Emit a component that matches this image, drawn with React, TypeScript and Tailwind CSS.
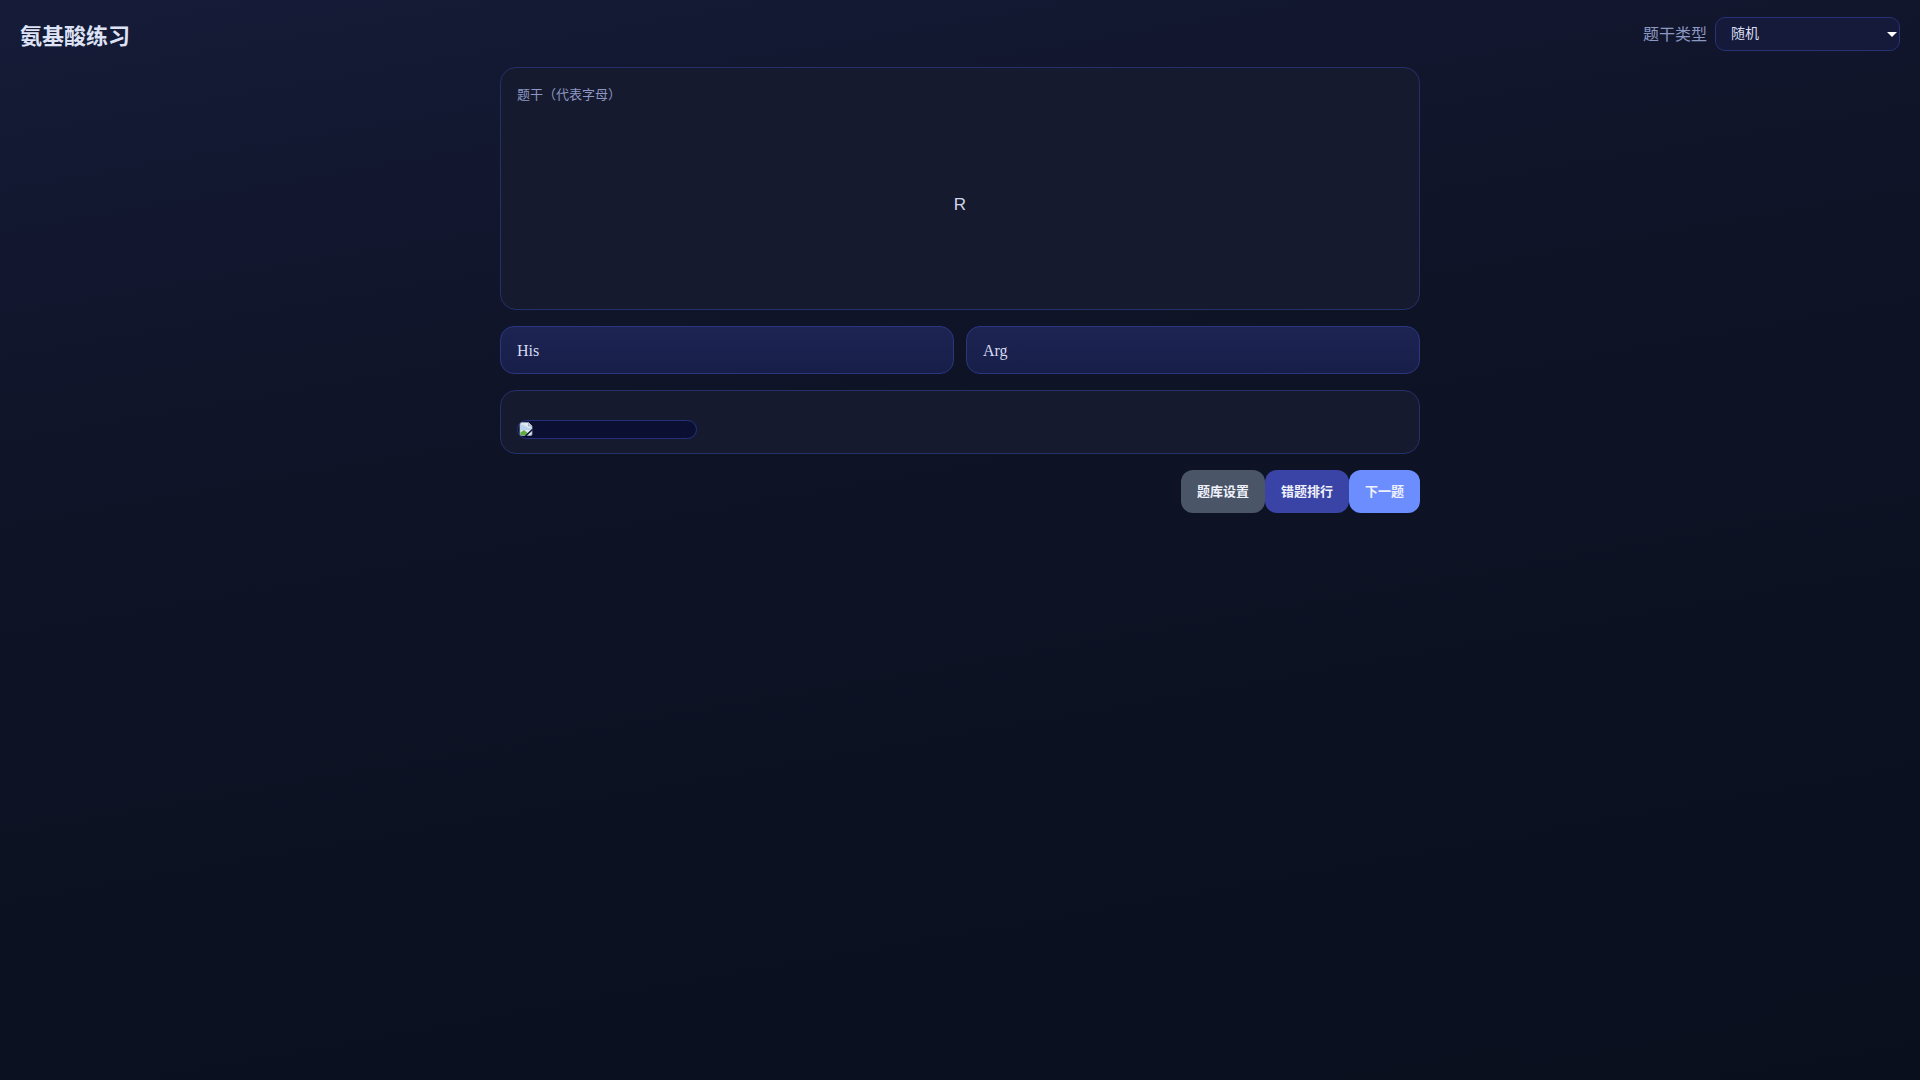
import React, { useState } from 'react';

const BrokenImage: React.FC = () => (
  <svg width="16" height="16" viewBox="0 0 16 16" className="shrink-0">
    <path d="M2 3.5 Q2 1.5 4 1.5 H10.5 L14 5 V13 Q14 14.5 12.5 14.5 H3.5 Q2 14.5 2 13 Z" fill="#dfe7f2" stroke="#9aa6b8" strokeWidth="0.8" />
    <path d="M2.4 4 Q5 3 8 5.5 Q11 8 13.6 7 V9 H2.4 Z" fill="#b9d3ef" />
    <path d="M2.4 14 V11.5 L6 9 L9.5 12 L7.5 14.2 Z" fill="#5fae3c" />
    <path d="M10.5 1.5 V5 H14" fill="#c7cfdb" stroke="#9aa6b8" strokeWidth="0.8" />
    <path d="M7.5 15 L14.5 8.5" stroke="#0b1033" strokeWidth="1.6" />
  </svg>
);

export default function App() {
  const [mode, setMode] = useState('随机');
  const [options] = useState(['His', 'Arg']);

  return (
    <div
      className="min-h-screen w-full bg-[linear-gradient(170deg,#161b38_0%,#0e1326_38%,#0a0f1e_100%)] text-[#d8ddf0]"
      style={{ fontFamily: '"Liberation Sans", "Noto Sans CJK SC", sans-serif' }}
    >
      <header className="flex h-[67px] items-center justify-between px-5">
        <h1 className="pt-[5px] text-[22px] font-bold text-[#dde3f5]">氨基酸练习</h1>
        <div className="flex items-center gap-2">
          <span className="pt-[2px] text-base text-[#8c97c4]">题干类型</span>
          <div className="relative">
            <select
              value={mode}
              onChange={(e) => setMode(e.target.value)}
              className="h-[34px] w-[185px] appearance-none rounded-[10px] border border-[#263275] bg-[#15193a] px-[15px] pb-[2px] text-sm text-[#d8ddf0] outline-none"
            >
              <option value="随机">随机</option>
              <option value="代表字母">代表字母</option>
              <option value="三字母缩写">三字母缩写</option>
            </select>
            <span className="pointer-events-none absolute right-[3px] top-[15px] h-0 w-0 border-x-[5px] border-t-[5px] border-x-transparent border-t-white" />
          </div>
        </div>
      </header>

      <main className="mx-auto flex w-[920px] flex-col gap-4">
        <div className="flex h-[243px] flex-col rounded-2xl border border-[#24306a] bg-[#161a2e] p-4">
          <div className="pt-[2px] text-[13px] leading-[18px] text-[#8c97c4]">题干（代表字母）</div>
          <div className="flex flex-1 items-center justify-center pt-[12px] text-[17px] text-[#d0d6ea]">R</div>
        </div>

        <div className="grid grid-cols-2 gap-3">
          {options.map((opt) => (
            <button
              key={opt}
              className="h-12 rounded-[14px] border border-[#2a3780] bg-gradient-to-b from-[#1d2453] to-[#171e48] px-4 pt-px text-left text-base text-[#d5dbf0]"
              style={{ fontFamily: '"Liberation Serif", serif' }}
            >
              {opt}
            </button>
          ))}
        </div>

        <div className="flex h-16 items-center rounded-2xl border border-[#24306a] bg-[#161a2e] px-4 pt-[14px]">
          <div className="flex h-[19px] w-[180px] items-center rounded-full border border-[#25307a] bg-[#0b1033]">
            <BrokenImage />
          </div>
        </div>

        <div className="flex justify-end">
          <button className="h-[43px] rounded-xl bg-[#4a5568] px-4 pt-px text-[13px] font-bold text-[#eef1fa]">题库设置</button>
          <button className="h-[43px] rounded-xl bg-[#3a44a6] px-4 pt-px text-[13px] font-bold text-[#eef1fa]">错题排行</button>
          <button className="h-[43px] rounded-xl bg-[#6b8dfd] px-4 pt-px text-[13px] font-bold text-[#eef1fa]">下一题</button>
        </div>
      </main>
    </div>
  );
}
